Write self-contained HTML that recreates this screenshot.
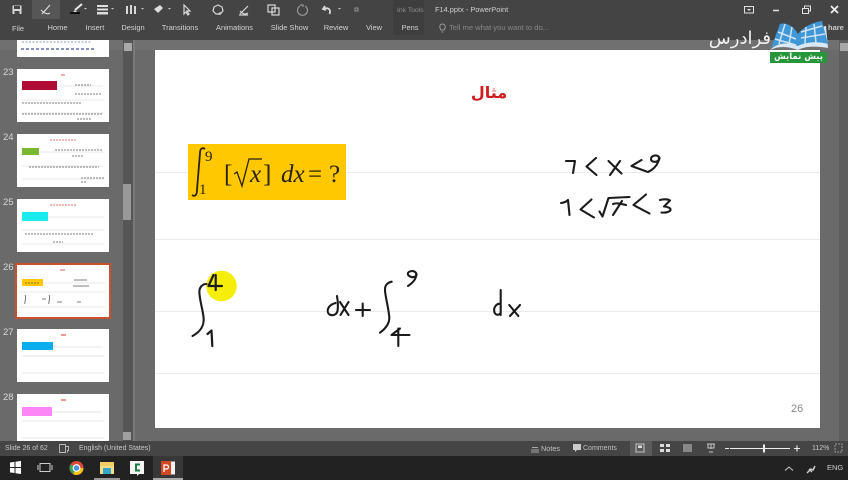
<!DOCTYPE html>
<html><head><meta charset="utf-8"><style>
*{box-sizing:border-box}
html,body{margin:0;padding:0;width:848px;height:480px;overflow:hidden;background:#6a6a6a;font-family:"Liberation Sans","DejaVu Sans",sans-serif}
#w{position:absolute;left:0;top:0;width:848px;height:480px;overflow:hidden;filter:blur(.35px)}
.a{position:absolute}
.t{position:absolute;white-space:nowrap;font-size:7.500px;color:#d2d2d2;line-height:10px}
.c{transform:translateX(-50%)}
.th{position:absolute;left:17px;width:92px;background:#fff;overflow:hidden}
.n{position:absolute;left:3px;font-size:9.500px;color:#d8d8d8;line-height:11px}
.sl{position:absolute;left:155px;width:665px;height:1px;background:#ebebeb}
</style></head><body><div id="w">
<div class="a" style="left:0;top:0;width:848px;height:40px;background:#444"></div>
<div class="a" style="left:393px;top:0;width:31px;height:35px;background:#3e3e3e"></div>
<div class="a" style="left:32px;top:0;width:28px;height:19px;background:#565656"></div>
<div class="a" style="left:0;top:40px;width:848px;height:10px;background:#707070"></div>

<svg class="a" style="left:0;top:0" width="424" height="20" fill="none" stroke="#d8d8d8" stroke-width="1.200">
<rect x="12.500" y="5.500" width="9" height="8.500" fill="#d8d8d8" stroke="none"/><rect x="14" y="6" width="6" height="3" fill="#444" stroke="none"/><rect x="14.500" y="11" width="5" height="3" fill="#444" stroke="none"/>
<path d="M42 14l8-9M41 10c3 3 6 5 9 3"/>
<path d="M75 10l7-6M74 11l3 2" stroke="#e8e8e8" stroke-width="2"/><rect x="70" y="12" width="10" height="2" fill="#111" stroke="none"/><path d="M84 8h3l-1.500 1.500z" fill="#ccc" stroke="none"/>
<rect x="97" y="5" width="11" height="2" fill="#ddd" stroke="none"/><rect x="97" y="8.500" width="11" height="2" fill="#ddd" stroke="none"/><rect x="97" y="12" width="11" height="2.500" fill="#ddd" stroke="none"/><path d="M111 8h3l-1.500 1.500z" fill="#ccc" stroke="none"/>
<path d="M127 6v8M131 5v9M135 6v8" stroke-width="2"/><path d="M141 8h3l-1.500 1.500z" fill="#ccc" stroke="none"/>
<path d="M154 9l6-4 3 3-5 5zM155 12l3 2" fill="#ddd" stroke="none"/><path d="M168 8h3l-1.500 1.500z" fill="#ccc" stroke="none"/>
<path d="M184 5v9l2-2 2 3 1-1-2-3h3z"/>
<path d="M214 7l4-2 4 2 1 4-3 3-4 0-3-3z"/><path d="M220 12v3M218.500 13.500h3" stroke-width="1"/>
<path d="M240 14l8-8M240 11c3 3 5 4 8 2"/><path d="M239 15h9"/>
<rect x="268" y="5" width="7" height="7"/><rect x="272" y="8" width="7" height="7"/>
<path d="M300 6a5 5 0 1 0 5 0M300 5h3v2" stroke="#999"/>
<path d="M325 6l-2 3 3 1M323.500 9c4-2 8 0 6 5" stroke-width="1.800"/><path d="M338 8h3l-1.500 1.500z" fill="#ccc" stroke="none"/>
<rect x="355" y="8" width="3" height="3" stroke-width=".8" stroke="#aaa"/>
</svg>
<span class="t c" style="left:18px;top:24px">File</span>
<span class="t c" style="left:57.500px;top:23px">Home</span>
<span class="t c" style="left:95px;top:23px">Insert</span>
<span class="t c" style="left:133px;top:23px">Design</span>
<span class="t c" style="left:180px;top:23px">Transitions</span>
<span class="t c" style="left:234.500px;top:23px">Animations</span>
<span class="t c" style="left:289.500px;top:23px">Slide Show</span>
<span class="t c" style="left:336px;top:23px">Review</span>
<span class="t c" style="left:374px;top:23px">View</span>
<span class="t c" style="left:410px;top:23px">Pens</span>
<span class="t" style="left:397px;top:6px;font-size:6.800px;color:#8c8c8c">Ink Tools</span>
<span class="t" style="left:435px;top:5px;font-size:7.400px;color:#d0d0d0">F14.pptx - PowerPoint</span>
<svg class="a" style="left:438px;top:22px" width="9" height="12" fill="none" stroke="#999"><path d="M2 6a2.800 2.800 0 1 1 5 0l-1 2H3zM3.500 10h2"/></svg>
<span class="t" style="left:449px;top:23px;font-size:7.600px;color:#878787">Tell me what you want to do...</span>
<span class="t" style="left:828px;top:23px;font-weight:bold;font-size:7.500px;color:#ccc">hare</span>
<svg class="a" style="left:740px;top:0" width="108" height="20" fill="none" stroke="#e0e0e0">
<rect x="4.500" y="6.500" width="9" height="6.500"/><path d="M7 9h4l-2 2z" fill="#e0e0e0" stroke="none"/>
<path d="M33 10.500h6" stroke-width="1.500"/>
<rect x="62.500" y="8.500" width="6" height="5"/><path d="M64.500 8v-2h6v5h-2"/>
<path d="M91 6l7 7M98 6l-7 7" stroke-width="1.800" stroke="#eee"/>
</svg>

<!-- left pane -->
<div class="a" style="left:123px;top:40px;width:10px;height:401px;background:#565656"></div>
<div class="a" style="left:133px;top:40px;width:2px;height:401px;background:#7a7a7a"></div>
<div class="a" style="left:124px;top:43px;width:8px;height:8px;background:#a8a8a8"></div>
<div class="a" style="left:123px;top:184px;width:8px;height:36px;background:#999"></div>
<div class="a" style="left:123px;top:432px;width:8px;height:8px;background:#a0a0a0"></div>
<div class="a" style="left:839px;top:40px;width:9px;height:401px;background:#5e5e5e"></div>
<div class="a" style="left:840px;top:43px;width:8px;height:8px;background:#a8a8a8"></div>

<!-- thumb 22 -->
<div class="th" style="top:40px;height:17px"><svg width="92" height="17" fill="none" stroke="#8a93b8" stroke-width="1"><path d="M5 2h70" stroke-dasharray="2 1.500"/><path d="M4 9h75" stroke-dasharray="3 2" stroke-width="2"/></svg></div>
<span class="n" style="top:67px">23</span>
<div class="th" style="top:69px;height:53px"><svg width="92" height="53" fill="none" stroke="#666" stroke-width=".8">
<path d="M44 6h4" stroke="#d33"/><rect x="5" y="12" width="35" height="9" fill="#b00b32" stroke="none"/>
<path d="M40 17h46M5 31h82M5 44h82" stroke="#e4e4e4"/><path d="M58 16h16M58 25h26M5 34h60M5 45h80M60 50h14" stroke-dasharray="2 1" stroke="#555"/></svg></div>
<span class="n" style="top:132px">24</span>
<div class="th" style="top:134px;height:53px"><svg width="92" height="53" fill="none" stroke="#666" stroke-width=".8">
<path d="M33 6h26" stroke="#e04545" stroke-dasharray="2 1"/><rect x="5" y="14" width="17" height="7" fill="#7ab92f" stroke="none"/>
<path d="M22 18h65M5 32h82M5 45h82" stroke="#e4e4e4"/><path d="M38 16h48M55 22h12M12 33h70M64 44h24M64 48h6" stroke-dasharray="2 1" stroke="#555"/></svg></div>
<span class="n" style="top:197px">25</span>
<div class="th" style="top:199px;height:53px"><svg width="92" height="53" fill="none" stroke="#666" stroke-width=".8">
<path d="M33 6h26" stroke="#e04545" stroke-dasharray="2 1"/><rect x="5" y="13" width="26" height="9" fill="#1cebee" stroke="none"/>
<path d="M31 18h56M5 31h82M5 45h82" stroke="#e4e4e4"/><path d="M8 35h68M36 43h10" stroke-dasharray="2 1" stroke="#555"/></svg></div>
<span class="n" style="top:262px">26</span>
<div class="a" style="left:15px;top:263px;width:96px;height:56px;border:2px solid #c8502c;background:#fff"></div>
<div class="th" style="top:265px;height:51px"><svg width="92" height="51" fill="none" stroke="#555" stroke-width=".8">
<path d="M43 5h5" stroke="#d33"/><rect x="5" y="14" width="21" height="7" fill="#ffc800" stroke="none"/><path d="M8 18h15" stroke="#554" stroke-dasharray="2 1"/>
<path d="M26 18h62M2 27h86M2 42h86" stroke="#e4e4e4"/><path d="M57 15h13M56 21h16M25 34h4M40 37h5M60 37h4"/><path d="M8 30c2 4-1 6 0 9M32 30c2 4-1 6 0 9"/></svg></div>
<span class="n" style="top:327px">27</span>
<div class="th" style="top:329px;height:53px"><svg width="92" height="53" fill="none"><path d="M44 6h5" stroke="#d33"/><rect x="5" y="13" width="31" height="8" fill="#0aaeef"/><path d="M36 18h50M5 27h82M5 44h82" stroke="#e4e4e4"/></svg></div>
<span class="n" style="top:392px">28</span>
<div class="th" style="top:394px;height:47px"><svg width="92" height="47" fill="none"><path d="M44 6h5" stroke="#d33"/><rect x="5" y="13" width="30" height="9" fill="#fc86f6"/><path d="M35 18h50M5 27h82M5 44h82" stroke="#e4e4e4"/></svg></div>

<!-- slide -->
<div class="a" style="left:155px;top:50px;width:665px;height:378px;background:#fff"></div>
<div class="sl" style="top:172px"></div><div class="sl" style="top:239px"></div><div class="sl" style="top:311px"></div><div class="sl" style="top:373px"></div>
<span class="t c" style="left:489px;top:81px;font-size:16px;line-height:24px;font-weight:bold;color:#d01c1f;font-family:'DejaVu Sans',sans-serif">مثال</span>
<span class="t" style="left:791px;top:403px;font-size:11px;line-height:13px;color:#8a8a8a">26</span>
<div class="a" style="left:188px;top:144px;width:158px;height:56px;background:#ffc800"></div>
<svg class="a" style="left:188px;top:144px" width="158" height="56" font-family="Liberation Serif, serif" fill="#2a2208">
<path d="M4 51c3 2 5 0 5-5L12 9c0-4 2-6 5-4" fill="none" stroke="#2a2208" stroke-width="1.800"/>
<text x="17" y="17" font-size="15">9</text><text x="11" y="50" font-size="15">1</text>
<text x="36" y="38" font-size="25">[</text>
<path d="M46 30l3-2 5 14 7-27h13" fill="none" stroke="#2a2208" stroke-width="1.300"/>
<text x="62" y="38" font-size="25" font-style="italic">x</text>
<text x="75" y="38" font-size="25">]</text>
<text x="93" y="38" font-size="25" font-style="italic">dx</text>
<text x="120" y="38" font-size="25">=</text>
<text x="141" y="38" font-size="25">?</text>
</svg>

<!-- ink strokes -->
<svg class="a" style="left:0;top:0" width="848" height="480" fill="none" stroke="#1b1b1b" stroke-width="2.100" stroke-linecap="round" stroke-linejoin="round">
<circle cx="221.500" cy="286" r="15.300" fill="#f5ee0a" stroke="none"/>
<path d="M566 161l9 0-2 12"/>
<path d="M596 158l-9.500 8.500 10 8.500"/>
<path d="M608.500 161l13 12.500M620 161l-10 14"/>
<path d="M641.500 160l-10 6 15 5.500"/>
<path d="M659 157c-3-3-8-1-8 2s5 4 8 1c1-2 0-3 0-3s1 9-11 15"/>
<path d="M561 203c3 0 6-2 7-3l1.500 15"/>
<path d="M591.500 199.500l-11 10 13.500 8"/>
<path d="M599.500 211.500l3 5 6-18.500 21-1"/>
<path d="M613 204c5-1.500 8 0 13 1M622 201l-9 14"/>
<path d="M646 194.500l-12.500 10.500 16 8.500"/>
<path d="M660 200c3-1 8-1 10 .5l-6 6c4 0 7 2 6.500 3.500-1 2-5 3-9 2.500"/>
<path d="M206.500 284c-4 0-6.500 3-7 6-1 6 3 18 4 27 1 8-2 14-11 19"/>
<path d="M213.500 275l-5 11h13.500M215.700 275v15" stroke-width="2.200"/>
<path d="M207.500 334l4-3.500.8 15.500" stroke-width="2.200"/>
<path d="M337 296c1 6 1 12 .5 15-1 4-5 5-8 3.500-3-2-3-9 6-11.500"/>
<path d="M340 302l8.500 13M348.500 302l-8 13"/>
<path d="M356 310h14M362.700 303.500v12.500"/>
<path d="M391.700 281.700c-4 1-6.700 3-6.700 8 0 6 4 20 4.300 28 .2 6-4 11-9.300 15"/>
<path d="M416 273c-2-3-7-2-8 0s3 5 6 4 3-2 2-4c1 5-2 9-8 13"/>
<path d="M400 328.500l-8.500 6.500h18M398.300 328.500v17.500"/>
<path d="M500.700 290v25M500.700 304c-4-1-7 3-6.500 7 .5 4 4 5 6.500 2"/>
<path d="M509.300 305l9 11M520 305l-10 11"/>
</svg>

<!-- logo above slide -->
<span class="t" style="left:700px;top:27px;font-size:18px;line-height:24px;color:#f2f2f2;font-family:'DejaVu Sans',sans-serif;width:71px;text-align:right;text-shadow:0 0 1px #555">فرادرس</span>
<svg class="a" style="left:768px;top:18px" width="62" height="34">
<path d="M2 32C10 24 20 24 30 28 34 20 44 10 58 8L60 30C48 28 38 28 30 32 20 28 10 28 2 32Z" fill="#dbe8f2"/>
<path d="M3 30L12 6C18 4 26 8 30 16L30 28C22 24 12 24 3 30Z" fill="#3f97d8"/>
<path d="M30 16C36 8 46 4 54 3L60 26C50 23 38 24 30 28Z" fill="#3f97d8"/>
<path d="M10 14l18 7M7 21l21 6M17 6l-6 20M24 9l-3 17M38 9l-1 17M46 6l2 19M33 20l24-4M33 14l21-6" stroke="#cfe4f4" stroke-width="1.500" fill="none"/>
</svg>
<div class="a" style="left:770px;top:52px;width:57px;height:11px;background:#27963a"></div>
<span class="t" style="left:770px;top:52px;width:57px;text-align:center;font-size:8.500px;line-height:11px;font-weight:bold;color:#fff;font-family:'DejaVu Sans',sans-serif">پیش نمایش</span>

<!-- status bar -->
<div class="a" style="left:0;top:441px;width:848px;height:15px;background:#454545"></div>
<span class="t" style="left:5px;top:444px;font-size:7px;color:#c8c8c8">Slide 26 of 62</span>
<svg class="a" style="left:58px;top:443px" width="12" height="12" fill="none" stroke="#bbb" stroke-width=".9"><path d="M1.500 1.500h6v8h-6zM7.500 3.500h3v4h-1v2"/></svg>
<span class="t" style="left:79px;top:444px;font-size:7px;color:#c8c8c8">English (United States)</span>
<svg class="a" style="left:530px;top:441px" width="318" height="15" fill="none" stroke="#c8c8c8">
<path d="M2 6.500h6M1 9h8M1 11h8" stroke-width=".8"/>
<path d="M43 3h8v6h-4l-2 2v-2h-2z" fill="#ccc" stroke="none"/>
<rect x="100" y="0" width="22" height="15" fill="#5c5c5c" stroke="none"/>
<rect x="106" y="3" width="8" height="8" fill="none"/><rect x="108" y="4.500" width="4" height="2.500" fill="#ddd" stroke="none"/>
<path d="M130 3h4v3h-4zM136 3h4v3h-4zM130 8h4v3h-4zM136 8h4v3h-4z" fill="#ddd" stroke="none"/>
<path d="M153 3h9v8h-9z" fill="#888" stroke="none"/>
<path d="M177 3h8M181 3v5M178 3v4h6V3M179 11h4" stroke-width="1"/>
<path d="M195 7.500h4M200 7.500h60M264 7.500h6M267 4.500v6" stroke-width="1.100" stroke="#eee"/>
<rect x="233" y="3.500" width="2" height="8" fill="#eee" stroke="none"/>
<rect x="305" y="3" width="7" height="8" stroke-dasharray="2 1" stroke="#999"/>
</svg>
<span class="t" style="left:541px;top:444px;color:#c0c0c0;font-size:7.300px">Notes</span>
<span class="t" style="left:583px;top:444px;color:#c0c0c0;font-size:7px">Comments</span>
<span class="t" style="left:812px;top:444px;color:#c8c8c8;font-size:7px">112%</span>

<!-- taskbar -->
<div class="a" style="left:0;top:456px;width:848px;height:24px;background:#222"></div>
<div class="a" style="left:153px;top:456px;width:30px;height:24px;background:#383838"></div>
<div class="a" style="left:94px;top:478px;width:26px;height:2px;background:#999"></div>
<div class="a" style="left:153px;top:478px;width:30px;height:2px;background:#aaa"></div>
<svg class="a" style="left:0;top:456px" width="200" height="24">
<path d="M10 6.500l4.500-.6V11H10zM15.500 5.700l5.500-.8V11h-5.500zM10 12h4.500v5L10 16.400zM15.500 12H21v6l-5.500-.8z" fill="#fff"/>
<path d="M40 7.500h10v8H40zM38 9v5M52 9v5" fill="none" stroke="#ccc" stroke-width="1"/>
<circle cx="76.500" cy="12" r="7" fill="#dd4a3a"/><path d="M76.500 12L70.500 8.500A7 7 0 0 0 73 18z" fill="#3aa655"/><path d="M76.500 12L73 18A7 7 0 0 0 83.500 12z" fill="#f5c518"/><circle cx="76.500" cy="12" r="3.300" fill="#4a8fe8" stroke="#fff" stroke-width="1.200"/>
<path d="M100 6h14v12h-14z" fill="#f2cd63"/><path d="M100 10h14v8h-14z" fill="#f7dc8a"/><rect x="103" y="12" width="8" height="6" fill="#35a5c8"/>
<path d="M130 5h14v13h-5l-2 2v-2h-7z" fill="#f4f4f4"/><path d="M140 8.500h-4v6h4" fill="none" stroke="#1c7a44" stroke-width="2"/>
<rect x="163" y="5.500" width="12" height="13" fill="#f2f2f2"/><rect x="161" y="5" width="10" height="14" fill="#d24726"/><path d="M164 16V9h2.500a1.800 1.800 0 0 1 0 4H164" fill="none" stroke="#fff" stroke-width="1.300"/>
</svg>
<svg class="a" style="left:780px;top:462px" width="40" height="14" fill="none" stroke="#ccc">
<path d="M5 8.500l4-3.500 4 3.500"/><path d="M27 11l4-4 2 1 2-4M29 7l3 3" stroke-width="1.500"/>
</svg>
<span class="t" style="left:827px;top:463px;color:#ccc;font-size:7.500px">ENG</span>
</div></body></html>
